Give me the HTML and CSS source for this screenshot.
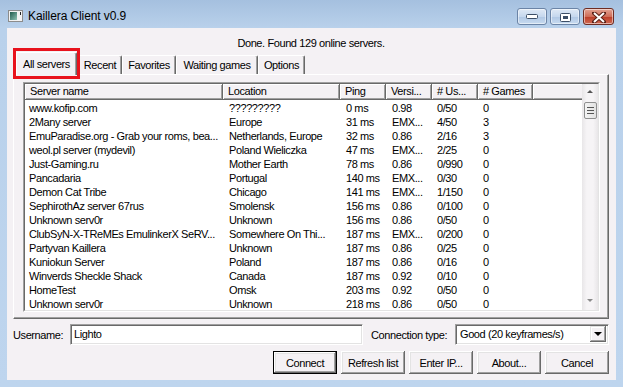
FILE: index.html
```html
<!DOCTYPE html>
<html lang="en">
<head>
    <meta charset="UTF-8">
    <title>Kaillera Client v0.9</title>
    <link rel="stylesheet" href="styles.css">
</head>
<body>
    <div class="window">
        <div class="titlebar">
            <svg class="app-icon" width="15" height="12" viewBox="0 0 15 12">
                <defs>
                    <linearGradient id="ig" x1="0" y1="0" x2="1" y2="1">
                        <stop offset="0" stop-color="#1f5a4c"/>
                        <stop offset="1" stop-color="#8fc2b4"/>
                    </linearGradient>
                </defs>
                <rect x="0.5" y="0.5" width="14" height="11" fill="#f2f2f2" stroke="#8c8c8c"/>
                <rect x="2" y="2" width="7" height="8" fill="url(#ig)"/>
                <rect x="12" y="2" width="1" height="3" fill="#222"/>
            </svg>
            <div class="title">Kaillera Client v0.9</div>
            <div class="caption">
                <div class="cap-btn">
                    <svg width="12" height="6" viewBox="0 0 12 6"><rect x="0.5" y="0.5" width="11" height="4" rx="1" fill="#fff" stroke="#3c4e66"/></svg>
                </div>
                <div class="cap-btn">
                    <svg width="11" height="9" viewBox="0 0 11 9"><rect x="0.5" y="0.5" width="10" height="8" rx="1" fill="#fff" stroke="#3c4e66"/><rect x="3" y="3" width="5" height="3" fill="#3c4e66"/></svg>
                </div>
                <div class="cap-btn close">
                    <svg width="14" height="11" viewBox="0 0 14 11"><path d="M2 1 L12 10 M12 1 L2 10" stroke="#5a2218" stroke-width="4" stroke-linecap="square"/><path d="M2 1 L12 10 M12 1 L2 10" stroke="#fff" stroke-width="2"/></svg>
                </div>
            </div>
        </div>

        <div class="client">
            <div class="status">Done. Found 129 online servers.</div>

            <div class="tabs">
                <div class="tab active" style="width:61px">All servers</div>
                <div class="tab" style="width:44px">Recent</div>
                <div class="tab" style="width:54px">Favorites</div>
                <div class="tab" style="width:82px">Waiting games</div>
                <div class="tab" style="width:47px">Options</div>
                <div class="highlight"></div>
            </div>

            <div class="panel">
                <div class="listview">
                    <div class="lv-inner">
                        <div class="lv-main">
                            <div class="lv-header">
                                <div class="hcell c1">Server name</div>
                                <div class="hcell c2">Location</div>
                                <div class="hcell c3">Ping</div>
                                <div class="hcell c4">Versi...</div>
                                <div class="hcell c5"># Us...</div>
                                <div class="hcell c6"># Games</div>
                                <div class="hcell filler"></div>
                            </div>
                            <div class="lv-rows">
                                <div class="row"><span class="c1">www.kofip.com</span><span class="c2">?????????</span><span class="c3">0 ms</span><span class="c4">0.98</span><span class="c5">0/50</span><span class="c6">0</span></div>
                                <div class="row"><span class="c1">2Many server</span><span class="c2">Europe</span><span class="c3">31 ms</span><span class="c4">EMX...</span><span class="c5">4/50</span><span class="c6">3</span></div>
                                <div class="row"><span class="c1">EmuParadise.org - Grab your roms, bea...</span><span class="c2">Netherlands, Europe</span><span class="c3">32 ms</span><span class="c4">0.86</span><span class="c5">2/16</span><span class="c6">3</span></div>
                                <div class="row"><span class="c1">weol.pl server (mydevil)</span><span class="c2">Poland Wieliczka</span><span class="c3">47 ms</span><span class="c4">EMX...</span><span class="c5">2/25</span><span class="c6">0</span></div>
                                <div class="row"><span class="c1">Just-Gaming.ru</span><span class="c2">Mother Earth</span><span class="c3">78 ms</span><span class="c4">0.86</span><span class="c5">0/990</span><span class="c6">0</span></div>
                                <div class="row"><span class="c1">Pancadaria</span><span class="c2">Portugal</span><span class="c3">140 ms</span><span class="c4">EMX...</span><span class="c5">0/30</span><span class="c6">0</span></div>
                                <div class="row"><span class="c1">Demon Cat Tribe</span><span class="c2">Chicago</span><span class="c3">141 ms</span><span class="c4">EMX...</span><span class="c5">1/150</span><span class="c6">0</span></div>
                                <div class="row"><span class="c1">SephirothAz server 67rus</span><span class="c2">Smolensk</span><span class="c3">156 ms</span><span class="c4">0.86</span><span class="c5">0/100</span><span class="c6">0</span></div>
                                <div class="row"><span class="c1">Unknown serv0r</span><span class="c2">Unknown</span><span class="c3">156 ms</span><span class="c4">0.86</span><span class="c5">0/50</span><span class="c6">0</span></div>
                                <div class="row"><span class="c1">ClubSyN-X-TReMEs EmulinkerX SeRV...</span><span class="c2">Somewhere On Thi...</span><span class="c3">187 ms</span><span class="c4">EMX...</span><span class="c5">0/200</span><span class="c6">0</span></div>
                                <div class="row"><span class="c1">Partyvan Kaillera</span><span class="c2">Unknown</span><span class="c3">187 ms</span><span class="c4">0.86</span><span class="c5">0/25</span><span class="c6">0</span></div>
                                <div class="row"><span class="c1">Kuniokun Server</span><span class="c2">Poland</span><span class="c3">187 ms</span><span class="c4">0.86</span><span class="c5">0/16</span><span class="c6">0</span></div>
                                <div class="row"><span class="c1">Winverds Sheckle Shack</span><span class="c2">Canada</span><span class="c3">187 ms</span><span class="c4">0.92</span><span class="c5">0/10</span><span class="c6">0</span></div>
                                <div class="row"><span class="c1">HomeTest</span><span class="c2">Omsk</span><span class="c3">203 ms</span><span class="c4">0.92</span><span class="c5">0/50</span><span class="c6">0</span></div>
                                <div class="row"><span class="c1">Unknown serv0r</span><span class="c2">Unknown</span><span class="c3">218 ms</span><span class="c4">0.86</span><span class="c5">0/50</span><span class="c6">0</span></div>
                            </div>
                        </div>
                        <div class="scrollbar">
                            <div class="sb-arrow up"></div>
                            <div class="sb-thumb"><i></i><i></i><i></i></div>
                            <div class="sb-arrow down"></div>
                        </div>
                    </div>
                </div>
            </div>

            <div class="user-row">
                <label class="lbl-user">Username:</label>
                <div class="sunken input">Lighto</div>
                <label class="lbl-conn">Connection type:</label>
                <div class="sunken select">
                    <span class="select-text">Good (20 keyframes/s)</span>
                    <div class="drop-btn"></div>
                </div>
            </div>

            <div class="button-row">
                <div class="btn default"><div class="btn-face">Connect</div></div>
                <div class="btn"><div class="btn-face">Refresh list</div></div>
                <div class="btn"><div class="btn-face">Enter IP...</div></div>
                <div class="btn"><div class="btn-face">About...</div></div>
                <div class="btn"><div class="btn-face">Cancel</div></div>
            </div>
        </div>
    </div>
</body>
</html>
```

FILE: styles.css
```css
/* Window frame */
body {
    margin: 0;
    font-family: "Liberation Sans", Arial, sans-serif;
    font-size: 11px;
    letter-spacing: -0.4px;
    color: #000;
    background: #bcd4ee;
}

.window {
    width: 623px;
    height: 387px;
    display: flex;
    flex-direction: column;
    background: linear-gradient(#a5c0df, #b9d1eb 28px, #bed5ee);
}

.titlebar {
    height: 28px;
    display: flex;
    align-items: flex-start;
    padding-left: 8px;
}

.app-icon {
    margin-top: 10px;
}

.title {
    margin: 8px 0 0 5px;
    font-size: 12px;
    letter-spacing: -0.1px;
    line-height: 16px;
}

.caption {
    margin: 8px 9px 0 auto;
    display: flex;
    gap: 3px;
}

.cap-btn {
    width: 30px;
    height: 17px;
    box-sizing: border-box;
    border: 1px solid #6b84a6;
    border-radius: 3px;
    background: linear-gradient(#dfe9f5, #c6d8ee 50%, #afc7e4 51%, #c8dbf0);
    box-shadow: inset 0 0 0 1px rgba(255, 255, 255, 0.5);
    display: flex;
    align-items: center;
    justify-content: center;
}

.cap-btn svg {
    margin-top: 1px;
}

.cap-btn.close {
    width: 31px;
    border-color: #6e2c22;
    background: linear-gradient(#e3a393, #cf6d58 50%, #bb3c27 51%, #d06a52);
}

/* Dialog body */
.client {
    flex: 1;
    margin: 0 7px 7px;
    padding: 8px 7px 6px 6px;
    background: #f4f1f4;
    display: flex;
    flex-direction: column;
}

.status {
    height: 14px;
    line-height: 14px;
    text-align: center;
}

.tabs {
    position: relative;
    display: flex;
    align-items: flex-end;
    height: 22px;
    margin-top: 2px;
    padding-left: 3px;
    z-index: 1;
}

.tab {
    height: 19px;
    box-sizing: border-box;
    display: flex;
    align-items: center;
    justify-content: center;
    border-top: 1px solid #fff;
    border-left: 1px solid #fff;
    border-right: 1px solid #696969;
    border-radius: 2px 2px 0 0;
    box-shadow: inset -1px 0 #a0a0a0;
    white-space: nowrap;
}

.tab.active {
    height: 23px;
    margin-bottom: -1px;
    margin-right: 1px;
    background: #f4f1f4;
}

.highlight {
    position: absolute;
    left: 0;
    top: -4px;
    width: 67px;
    height: 31px;
    box-sizing: border-box;
    border: 3px solid #e8121c;
}

.panel {
    height: 245px;
    box-sizing: border-box;
    border-top: 1px solid #fff;
    border-left: 1px solid #fff;
    border-right: 1px solid #696969;
    border-bottom: 1px solid #696969;
    box-shadow: inset -1px -1px #a0a0a0;
    padding: 7px 8px 6px 9px;
    display: flex;
}

/* Server list */
.listview {
    flex: 1;
    display: flex;
    border-top: 1px solid #a0a0a0;
    border-left: 1px solid #a0a0a0;
    border-right: 1px solid #fff;
    border-bottom: 1px solid #fff;
}

.lv-inner {
    flex: 1;
    display: flex;
    overflow: hidden;
    background: #fff;
    border-top: 1px solid #696969;
    border-left: 1px solid #696969;
    border-right: 1px solid #e3e3e3;
    border-bottom: 1px solid #e3e3e3;
}

.lv-main {
    flex: 1;
    overflow: hidden;
}

.lv-header {
    display: flex;
    height: 16px;
    background: #f4f1f4;
}

.hcell {
    box-sizing: border-box;
    height: 16px;
    line-height: 15px;
    padding-left: 5px;
    border-right: 1px solid #696969;
    border-bottom: 1px solid #696969;
    box-shadow: inset 1px 1px #fff, inset -1px -1px #a0a0a0;
    white-space: nowrap;
    overflow: hidden;
}

.hcell.filler {
    flex: 1;
    border-right: none;
    box-shadow: inset 1px 1px #fff, inset 0 -1px #a0a0a0;
}

.c1 { width: 198px; }
.c2 { width: 117px; }
.c3 { width: 46px; }
.c4 { width: 46px; }
.c5 { width: 46px; }
.c6 { width: 55px; }

.lv-rows {
    padding-top: 1px;
}

.row {
    display: flex;
    height: 14px;
    line-height: 14px;
}

.row span {
    flex: none;
    box-sizing: border-box;
    padding-left: 5px;
    white-space: nowrap;
    overflow: hidden;
}

.row .c1 { padding-left: 4px; }
.row .c2 { padding-left: 6px; }
.row .c3, .row .c4 { padding-left: 6px; }

.scrollbar {
    width: 16px;
    display: flex;
    flex-direction: column;
    align-items: center;
    background: linear-gradient(90deg, #e8e6e8, #f6f4f6 30%, #f6f4f6 70%, #e8e6e8);
}

.sb-arrow {
    height: 16px;
    width: 16px;
    position: relative;
}

.sb-arrow::after {
    content: "";
    position: absolute;
    left: 5px;
    top: 6px;
    border-left: 3px solid transparent;
    border-right: 3px solid transparent;
}

.sb-arrow.up::after {
    border-bottom: 3px solid #555;
}

.sb-arrow.down {
    margin-top: auto;
}

.sb-arrow.down::after {
    top: 5px;
    border-top: 3px solid #8a8a8a;
}

.sb-thumb {
    margin-top: 2px;
    width: 13px;
    height: 17px;
    box-sizing: border-box;
    border: 1px solid #8e8f8f;
    border-radius: 2px;
    background: linear-gradient(90deg, #f4f4f4, #e2e2e2);
    display: flex;
    flex-direction: column;
    align-items: center;
    justify-content: center;
    gap: 2px;
}

.sb-thumb i {
    width: 7px;
    height: 1px;
    background: #555;
}

/* Bottom controls */
.user-row {
    display: flex;
    align-items: center;
    height: 21px;
    margin-top: 5px;
}

.lbl-user {
    width: 57px;
}

.lbl-conn {
    width: 84px;
    margin-left: 8px;
}

.sunken {
    height: 21px;
    box-sizing: border-box;
    background: #fff;
    border-top: 1px solid #a0a0a0;
    border-left: 1px solid #a0a0a0;
    border-right: 1px solid #fff;
    border-bottom: 1px solid #fff;
    box-shadow: inset 1px 1px #696969, inset -1px -1px #e3e3e3;
}

.input {
    width: 293px;
    padding: 2px 3px;
    line-height: 15px;
}

.select {
    flex: 1;
    display: flex;
    align-items: center;
    padding: 1px 2px 2px 4px;
}

.select-text {
    flex: 1;
    line-height: 15px;
}

.drop-btn {
    width: 16px;
    height: 16px;
    box-sizing: border-box;
    background: #f4f1f4;
    box-shadow: inset -1px -1px #696969, inset 1px 1px #e3e3e3, inset -2px -2px #a0a0a0, inset 2px 2px #fff;
    position: relative;
}

.drop-btn::after {
    content: "";
    position: absolute;
    left: 4px;
    top: 6px;
    border-left: 4px solid transparent;
    border-right: 4px solid transparent;
    border-top: 4px solid #000;
}

.button-row {
    display: flex;
    justify-content: flex-end;
    gap: 4px;
    margin-top: 6px;
    height: 23px;
}

.btn {
    width: 64px;
    height: 23px;
    box-sizing: border-box;
    display: flex;
}

.btn-face {
    flex: 1;
    display: flex;
    align-items: center;
    justify-content: center;
    background: #f4f1f4;
    box-shadow: inset -1px -1px #696969, inset 1px 1px #fff, inset -2px -2px #a0a0a0, inset 2px 2px #e3e3e3;
    white-space: nowrap;
}

.btn.default {
    border: 1px solid #000;
}
```
